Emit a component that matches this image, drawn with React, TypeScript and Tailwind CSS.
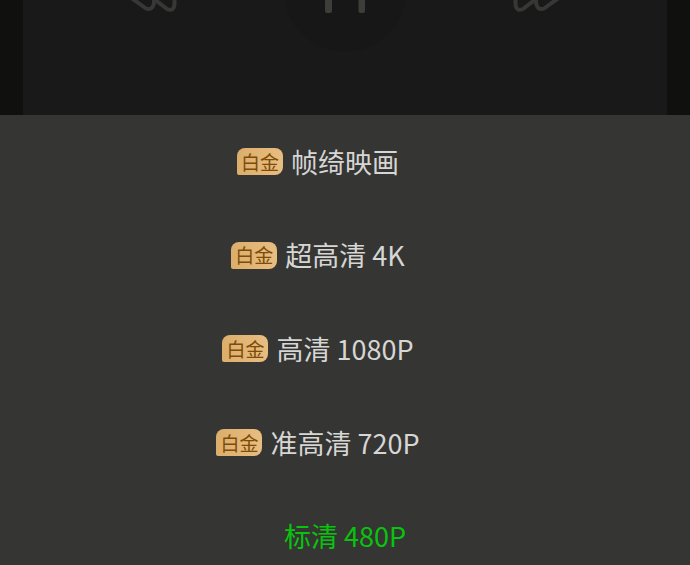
import React, { useState } from 'react';

const qualities = [
  { id: 'cinema', label: '帧绮映画', platinum: true },
  { id: '4k', label: '超高清 4K', platinum: true },
  { id: '1080p', label: '高清 1080P', platinum: true },
  { id: '720p', label: '准高清 720P', platinum: true },
  { id: '480p', label: '标清 480P', platinum: false },
];

// Two outlined triangles pointing left, mirrored for fast forward
function SeekIcon({ className = '' }: { className?: string }) {
  return (
    <svg viewBox="0 0 56 48" className={`h-12 w-14 ${className}`} fill="none" stroke="#373736" strokeWidth="4" strokeLinecap="round" strokeLinejoin="round">
      <path d="M31 35V39Q29.500 47 23 44.500L7 33Q0 24 7 15L23 3.500Q29.500 1 31 9V13" />
      <path d="M31 13L43 4Q51.500 0 51.500 8V39Q51.500 48 44 45L31 35" />
    </svg>
  );
}

function PauseIcon() {
  return (
    <svg viewBox="0 0 40 44" className="h-11 w-10" fill="#3d3d3a">
      <rect width="7" height="44" rx="2" />
      <rect x="33.500" width="6.500" height="44" rx="2" />
    </svg>
  );
}

export default function App() {
  const [selected, setSelected] = useState('480p');

  return (
    <div className="flex h-screen flex-col overflow-hidden bg-[#353533] font-['Noto_Sans_CJK_SC','Noto_Sans',sans-serif]">
      {/* Dimmed player */}
      <div className="flex h-[115px] shrink-0 overflow-hidden bg-[#10100e] px-[23px]">
        <div className="flex flex-1 items-start justify-center gap-[105px] bg-[#191919]">
          <button aria-label="快退" className="-mt-9">
            <SeekIcon />
          </button>
          <button aria-label="暂停" className="-mt-[70px] flex h-[122px] w-[122px] items-center justify-center rounded-full bg-[#171717]">
            <PauseIcon />
          </button>
          <button aria-label="快进" className="-mt-9">
            <SeekIcon className="-scale-x-100" />
          </button>
        </div>
      </div>

      {/* Quality list */}
      <div className="grid h-[468px] shrink-0 grid-rows-5">
        {qualities.map((q) => (
          <button
            key={q.id}
            onClick={() => setSelected(q.id)}
            className={`grid grid-cols-[1fr_auto_1fr] items-center gap-2 text-[27px] leading-8 ${selected === q.id ? 'text-[#09c30d]' : 'text-[#d6d6d4]'}`}
          >
            <span className="flex justify-end">
              {q.platinum && (
                <span className="flex h-[27px] w-[46px] items-center justify-center rounded-lg rounded-bl-xs bg-linear-to-r from-[#dcae6c] to-[#e8bd80] text-[19px] leading-6 text-[#7d4c08]">
                  白金
                </span>
              )}
            </span>
            <span>{q.label}</span>
          </button>
        ))}
      </div>
    </div>
  );
}
